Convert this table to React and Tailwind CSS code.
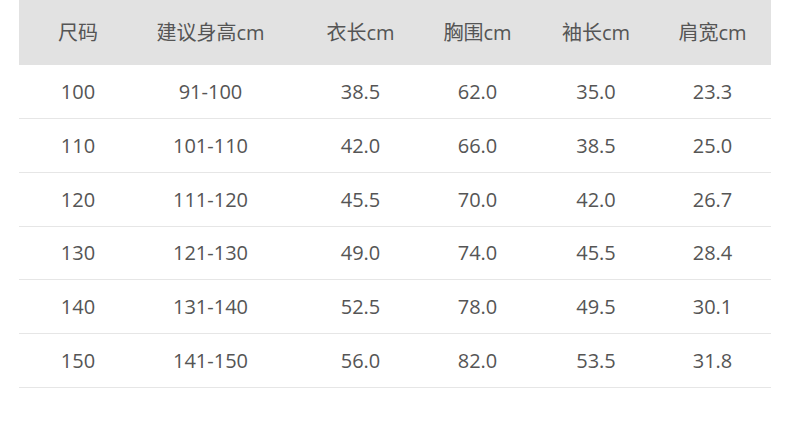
const headers = ['尺码', '建议身高cm', '衣长cm', '胸围cm', '袖长cm', '肩宽cm'];

const rows = [
  ['100', '91-100', '38.5', '62.0', '35.0', '23.3'],
  ['110', '101-110', '42.0', '66.0', '38.5', '25.0'],
  ['120', '111-120', '45.5', '70.0', '42.0', '26.7'],
  ['130', '121-130', '49.0', '74.0', '45.5', '28.4'],
  ['140', '131-140', '52.5', '78.0', '49.5', '30.1'],
  ['150', '141-150', '56.0', '82.0', '53.5', '31.8'],
];

// column widths follow the auto layout of the original table
const cols = 'grid grid-cols-[118px_147px_153px_81px_156px_77px_1fr]';

export default function App() {
  return (
    <div
      className="h-[431px] w-[790px] bg-white pl-[19px] pr-[19px] text-[20px] text-[#555555]"
      style={{ fontFamily: '"Open Sans", "Noto Sans CJK SC", sans-serif' }}
    >
      <div className={`${cols} h-[65px] items-center bg-[#e2e2e2]`}>
        {headers.map((h) => (
          <div key={h} className="text-center leading-none">
            {h}
          </div>
        ))}
        <div />
      </div>

      {rows.map((row, i) => (
        <div
          key={row[0]}
          className={`${cols} items-center border-b border-[#e6e6e6] ${i === 3 ? 'h-[53px]' : 'h-[54px]'}`}
        >
          {row.map((cell, j) => (
            <div key={j} className="text-center leading-none">
              {cell}
            </div>
          ))}
          <div />
        </div>
      ))}
    </div>
  );
}
